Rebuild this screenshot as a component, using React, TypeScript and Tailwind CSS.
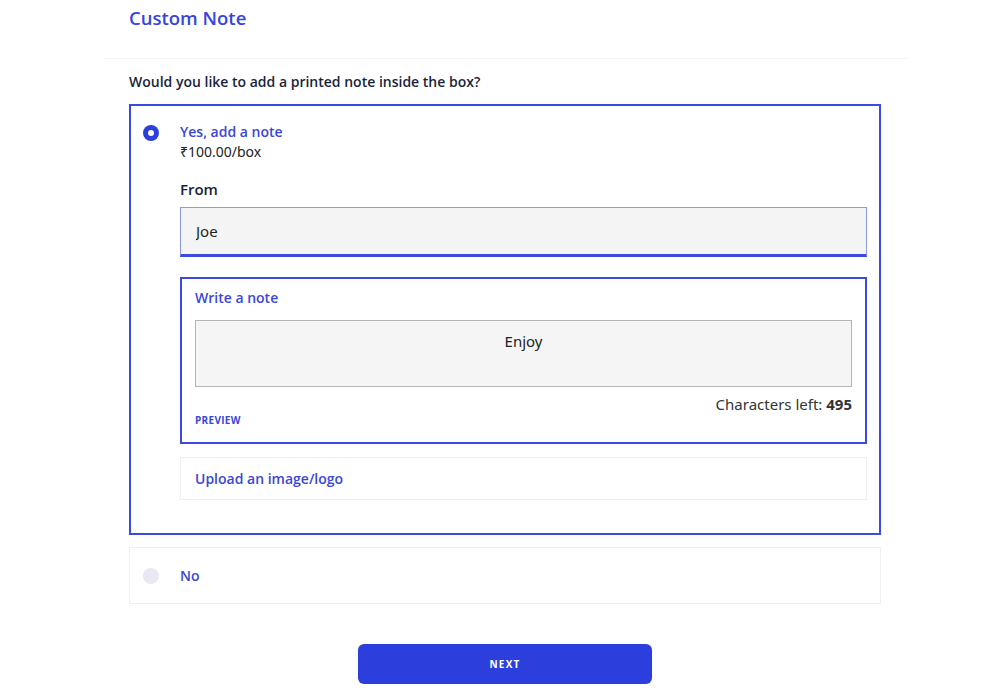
import { useState } from 'react'

const heading = "font-['Open_Sans',sans-serif]"
const body = "font-['Noto_Sans',sans-serif]"

const Radio = ({ checked }: { checked: boolean }) =>
  checked ? (
    <span className="flex h-4 w-4 items-center justify-center rounded-full bg-[#2c3fdc]">
      <span className="h-[6px] w-[6px] rounded-full bg-white" />
    </span>
  ) : (
    <span className="h-4 w-4 rounded-full bg-[#e9e9f5]" />
  )

const CustomNote = () => {
  const [addNote, setAddNote] = useState(true)
  const [from, setFrom] = useState('Joe')
  const [note, setNote] = useState('Enjoy')
  const maxChars = 500

  return (
    <div className={`min-h-screen bg-white ${heading}`}>
      <div className="ml-[103px] w-[804px] px-[26px]">
        <header className="-mx-[26px] border-b border-[#f4f4f6] px-[26px] pb-[27px] pt-[5px]">
          <h1 className="text-[18.5px] font-semibold leading-[26px] text-[#3744dd]">Custom Note</h1>
        </header>

        <p className="mt-[13px] text-[14px] font-semibold leading-[20px] text-[#1b1f3b]">
          Would you like to add a printed note inside the box?
        </p>

        {/* yes option */}
        <div
          className={`mt-[12px] w-[752px] border-2 ${addNote ? 'border-[#3b4ae0]' : 'border-[#eeeeee]'} pb-[33px] px-[12px] pt-[16px]`}
          onClick={() => setAddNote(true)}
        >
          <div className="flex">
            <div className="pt-[3px]">
              <Radio checked={addNote} />
            </div>
            <div className="ml-[21px] flex-1">
              <div className="text-[14px] font-semibold leading-[20px] text-[#3b46d8]">Yes, add a note</div>
              <div className={`text-[14px] leading-[20px] text-[#222] ${body}`}>₹100.00/box</div>

              <label className="mt-[17px] block text-[15px] font-semibold leading-[20px] text-[#1b1f3b]">From</label>
              <input
                value={from}
                onChange={e => setFrom(e.target.value)}
                className={`mt-[8px] h-[50px] w-full border border-b-[3px] border-[#8e97ee] border-b-[#3b4ae0] bg-[#f4f4f4] px-[15px] text-[15px] text-[#222] outline-none ${body}`}
              />

              <div className="mt-[20px] border-2 border-[#3b4ae0] px-[13px] pb-[16px] pt-[9px]">
                <div className="text-[14px] font-semibold leading-[20px] text-[#3b46d8]">Write a note</div>
                <textarea
                  value={note}
                  maxLength={maxChars}
                  onChange={e => setNote(e.target.value)}
                  className={`mt-[12px] block h-[67px] w-full resize-none border border-[#b5b5b5] bg-[#f5f5f5] px-3 pt-[10px] text-center text-[15px] leading-[20px] text-[#222] outline-none ${body}`}
                />
                <div className={`mt-[7px] text-right text-[15px] leading-[20px] text-[#333] ${body}`}>
                  Characters left: <span className="font-bold">{maxChars - note.length}</span>
                </div>
                <button className="block text-[10px] font-bold leading-[12px] tracking-[0.03em] text-[#3b46d8]">
                  PREVIEW
                </button>
              </div>

              <div className="mt-[13px] flex h-[43px] items-center border border-[#efefef] px-[14px]">
                <span className="text-[14px] font-semibold text-[#3b46d8]">Upload an image/logo</span>
              </div>
            </div>
          </div>
        </div>

        {/* no option */}
        <div
          className={`mt-[12px] flex h-[57px] w-[752px] items-center border ${addNote ? 'border-[#efefef]' : 'border-[#3b4ae0]'} pl-[13px]`}
          onClick={() => setAddNote(false)}
        >
          <Radio checked={!addNote} />
          <span className="ml-[21px] text-[14px] font-semibold text-[#3b46d8]">No</span>
        </div>

        <div className="mt-[40px] flex justify-center">
          <button className="h-[40px] w-[294px] rounded-[6px] bg-[#2c3fdc] text-[10px] font-bold tracking-[0.12em] text-white">
            NEXT
          </button>
        </div>
      </div>
    </div>
  )
}

export default function App() {
  return <CustomNote />
}
